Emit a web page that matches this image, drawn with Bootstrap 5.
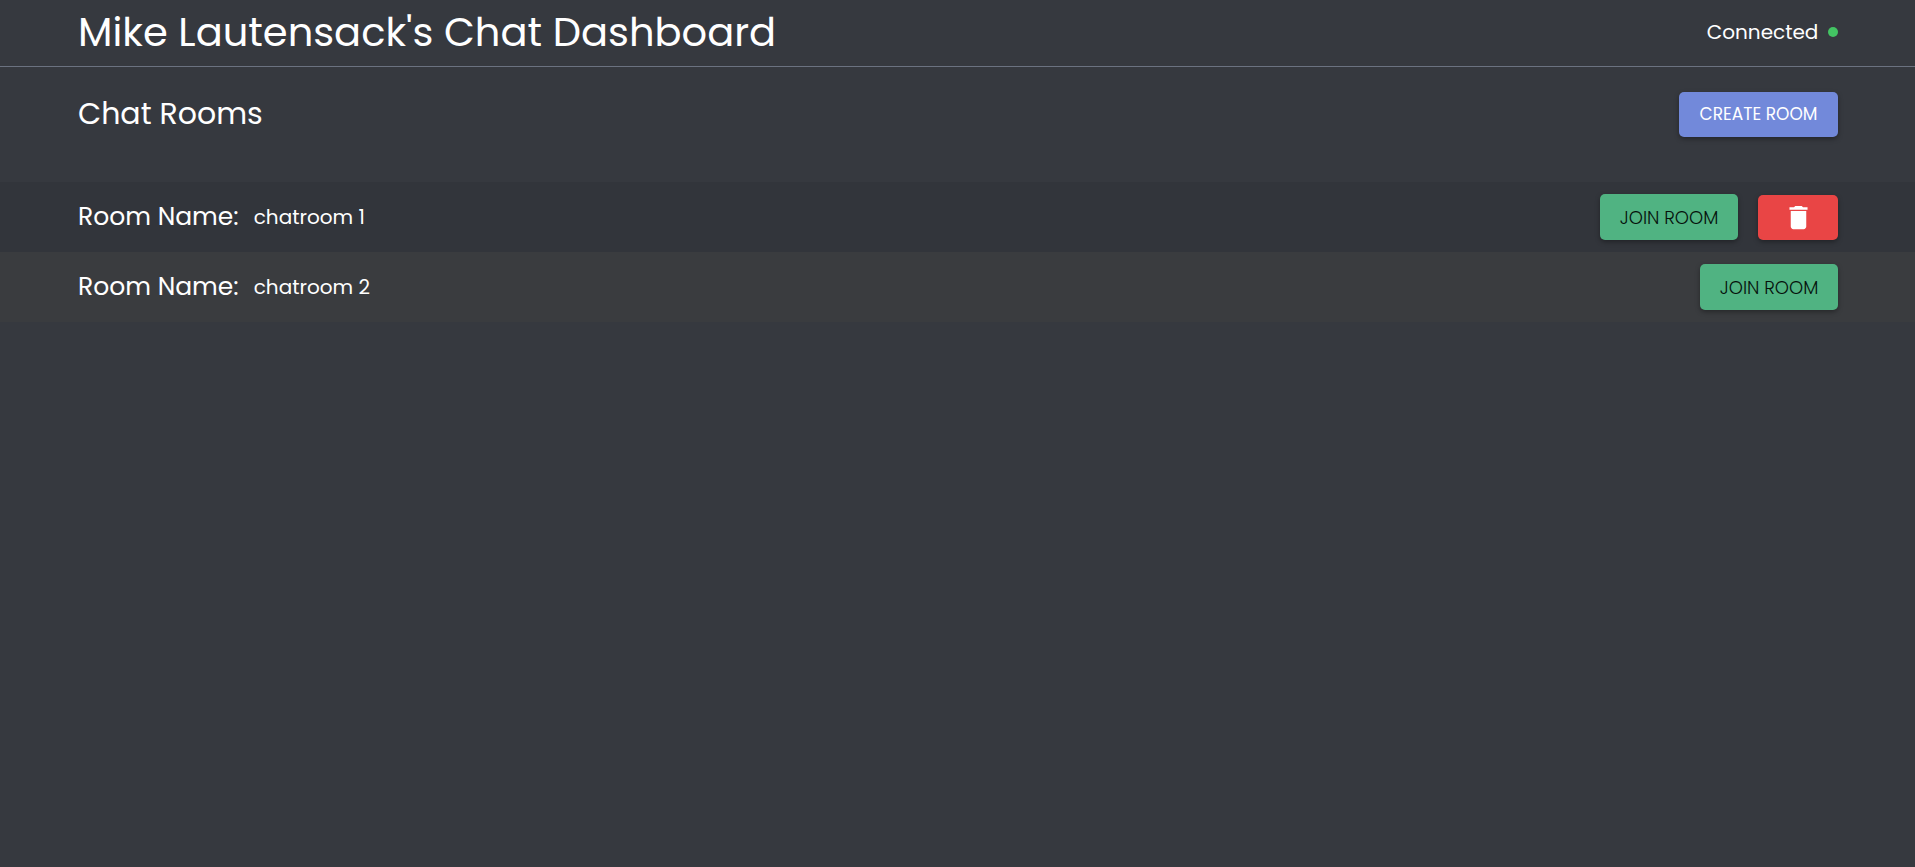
<!DOCTYPE html>
<html lang="en">
<head>
<meta charset="utf-8">
<meta name="viewport" content="width=device-width, initial-scale=1">
<title>Chat Dashboard</title>
<link href="https://cdn.jsdelivr.net/npm/bootstrap@5.3.0/dist/css/bootstrap.min.css" rel="stylesheet">
<style>
  body { background: #36393f; color: #fff; font-family: Poppins, Inter, sans-serif; }
  .page-gutter { padding-left: 78px; padding-right: 4%; }
  .topbar { height: 67px; padding-bottom: 2px; border-bottom: 1px solid #6b7280; }
  .topbar h1 { font-size: 40px; font-weight: 400; }
  .section-title { font-size: 30px; font-weight: 400; line-height: 43px; }
  .status-text { font-size: 20px; line-height: 28px; }
  .status { gap: 10px; }
  .status-dot { width: 10px; height: 10px; background: #43c463; }
  .rooms-head { height: 115px; padding-top: 25px; }
  .room { height: 70px; background: #32353b; }
  .room:nth-child(even) { background: #3a3c3f; }
  .room-info { gap: 15px; }
  .room-actions { gap: 20px; }
  .room-label { font-size: 25px; font-weight: 400; }
  .room-name { font-size: 20px; }
  .action { height: 46px; padding: 0 20px; border: 0; border-radius: 5px; white-space: nowrap; box-shadow: 0 2px 5px rgba(0, 0, 0, .35); }
  .action-create, .action-create:hover { height: 45px; padding: 0 21px; background: #7289da; color: #fff; font-size: 17px; font-weight: 400; }
  .action-join, .action-join:hover { background: #50b382; color: #06120c; font-size: 18px; font-weight: 300; }
  .action-delete, .action-delete:hover { width: 80px; height: 45px; background: #e94545; color: #fff; }
</style>
</head>
<body>
<div class="min-vh-100 d-flex flex-column">
  <header class="topbar page-gutter d-flex align-items-center justify-content-between">
    <h1 class="mb-0">Mike Lautensack's Chat Dashboard</h1>
    <div class="status d-flex align-items-center">
      <span class="status-text">Connected</span>
      <span class="status-dot rounded-circle"></span>
    </div>
  </header>
  <main class="flex-grow-1">
    <div class="rooms-head page-gutter d-flex align-items-start justify-content-between">
      <h2 class="section-title mb-0">Chat Rooms</h2>
      <button type="button" class="btn action action-create">CREATE ROOM</button>
    </div>
    <ul class="list-unstyled mb-0">
      <li class="room page-gutter d-flex align-items-center justify-content-between">
        <div class="room-info d-flex align-items-center">
          <h3 class="room-label mb-0">Room Name:</h3>
          <span class="room-name">chatroom 1</span>
        </div>
        <div class="room-actions d-flex align-items-end">
          <button type="button" class="btn action action-join">JOIN ROOM</button>
          <button type="button" class="btn action action-delete p-0 d-flex align-items-center justify-content-center" aria-label="Delete room">
            <svg width="31" height="31" viewBox="0 0 24 24" fill="currentColor" aria-hidden="true"><path d="M6 19c0 1.1.9 2 2 2h8c1.1 0 2-.9 2-2V7H6v12zM19 4h-3.500l-1-1h-5l-1 1H5v2h14V4z"/></svg>
          </button>
        </div>
      </li>
      <li class="room page-gutter d-flex align-items-center justify-content-between">
        <div class="room-info d-flex align-items-center">
          <h3 class="room-label mb-0">Room Name:</h3>
          <span class="room-name">chatroom 2</span>
        </div>
        <button type="button" class="btn action action-join">JOIN ROOM</button>
      </li>
    </ul>
  </main>
</div>
<script src="https://cdn.jsdelivr.net/npm/bootstrap@5.3.0/dist/js/bootstrap.bundle.min.js"></script>
</body>
</html>
